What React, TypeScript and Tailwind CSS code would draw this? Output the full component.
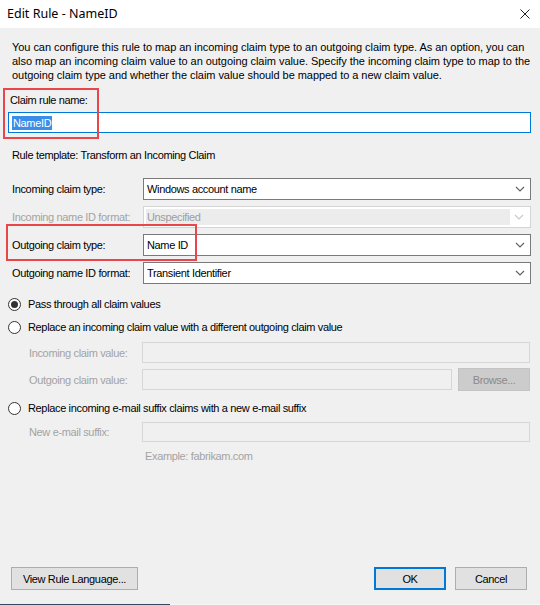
import React from "react";

function Chevron({ disabled }: { disabled?: boolean }) {
  return (
    <svg viewBox="0 0 10 6" className="h-[6px] w-[10px]" aria-hidden>
      <path
        d="M1 1l4 4 4-4"
        fill="none"
        stroke={disabled ? "#c8c8c8" : "#606060"}
        strokeWidth="1.1"
      />
    </svg>
  );
}

function Select({ value, disabled }: { value: string; disabled?: boolean }) {
  if (disabled) {
    return (
      <div className="flex h-[22px] flex-1 items-center border border-[#d4d4d4] bg-white p-[2px]">
        <div className="flex h-full flex-1 items-center bg-[#ececec] pl-[1px] text-[#9d9d9d]">{value}</div>
        <div className="flex w-[18px] items-center justify-center">
          <Chevron disabled />
        </div>
      </div>
    );
  }
  return (
    <div className="flex h-[22px] flex-1 items-center border border-[#7a7a7a] bg-white pl-[3px]">
      <span className="flex-1">{value}</span>
      <div className="flex w-[20px] items-center justify-center">
        <Chevron />
      </div>
    </div>
  );
}

function FieldRow({ label, value, disabled }: { label: string; value: string; disabled?: boolean }) {
  return (
    <div className="flex items-center">
      <span className={`w-[131px] ${disabled ? "text-[#a3a3a3]" : ""}`}>{label}</span>
      <Select value={value} disabled={disabled} />
    </div>
  );
}

function Radio({ checked, label }: { checked?: boolean; label: string }) {
  return (
    <div className="flex h-[16px] items-center pl-[8px]">
      <span className="flex h-[13px] w-[13px] items-center justify-center rounded-full border border-[#333333] bg-white">
        {checked && <span className="h-[7px] w-[7px] rounded-full bg-[#333333]" />}
      </span>
      <span className="ml-[7px]">{label}</span>
    </div>
  );
}

function Btn({ label, width, primary, disabled }: { label: string; width: string; primary?: boolean; disabled?: boolean }) {
  return (
    <div
      className={`flex h-[23px] items-center justify-center ${width} ${
        disabled
          ? "border border-[#c4c4c4] bg-[#cccccc] text-[#8a8a8a]"
          : primary
          ? "border-2 border-[#0078d7] bg-[#e1e1e1]"
          : "border border-[#adadad] bg-[#e1e1e1]"
      }`}
    >
      {label}
    </div>
  );
}

export default function App() {
  return (
    <div
      className="relative flex h-[605px] w-[540px] flex-col bg-[#f0f0f0] text-[11px] leading-[14px] tracking-[-0.35px] text-black"
      style={{ fontFamily: '"Liberation Sans", Arial, sans-serif' }}
    >
      {/* Title bar */}
      <div className="flex h-[28px] items-center justify-between bg-white pl-[7px] pr-[10px]">
        <span className="text-[12.5px] tracking-normal" style={{ fontFamily: '"Noto Sans", sans-serif' }}>
          Edit Rule - NameID
        </span>
        <svg viewBox="0 0 10 10" className="h-[10px] w-[10px]" aria-hidden>
          <path d="M0.5 0.5l9 9M9.5 0.5l-9 9" stroke="#222" strokeWidth="1" />
        </svg>
      </div>

      <div className="flex flex-1 flex-col pl-[12px] pr-[9px]">
        <p className="mt-[12px] tracking-[-0.05px]">
          You can configure this rule to map an incoming claim type to an outgoing claim type. As an option, you can
          also map an incoming claim value to an outgoing claim value. Specify the incoming claim type to map to the
          outgoing claim type and whether the claim value should be mapped to a new claim value.
        </p>

        <span className="mt-[11px] -ml-[2px]">Claim rule name:</span>
        <div className="-ml-[4px] mt-[5px] flex h-[21px] items-center border border-[#0078d7] bg-white pl-[3px]">
          <span className="bg-[#3b8ee8] px-[1px] text-white">NameID</span>
        </div>

        <span className="mt-[15px]">Rule template: Transform an Incoming Claim</span>

        <div className="mt-[16px] flex flex-col gap-[6px]">
          <FieldRow label="Incoming claim type:" value="Windows account name" />
          <FieldRow label="Incoming name ID format:" value="Unspecified" disabled />
          <FieldRow label="Outgoing claim type:" value="Name ID" />
          <FieldRow label="Outgoing name ID format:" value="Transient Identifier" />
        </div>

        <div className="-ml-[12px] mt-[12px]">
          <Radio checked label="Pass through all claim values" />
        </div>
        <div className="-ml-[12px] mt-[7px]">
          <Radio label="Replace an incoming claim value with a different outgoing claim value" />
        </div>

        <div className="mt-[7px] flex items-center pl-[17px] text-[#a3a3a3]">
          <span className="w-[113px]">Incoming claim value:</span>
          <div className="mr-[1px] h-[21px] flex-1 border border-[#d6d6d6] bg-[#f0f0f0]" />
        </div>
        <div className="mt-[5px] flex items-center pl-[17px] text-[#a3a3a3]">
          <span className="w-[113px]">Outgoing claim value:</span>
          <div className="h-[21px] flex-1 border border-[#d6d6d6] bg-[#f0f0f0]" />
          <div className="ml-[6px] mr-[1px]">
            <Btn label="Browse..." width="w-[72px]" disabled />
          </div>
        </div>

        <div className="-ml-[12px] mt-[9px]">
          <Radio label="Replace incoming e-mail suffix claims with a new e-mail suffix" />
        </div>
        <div className="mt-[6px] flex items-center pl-[17px] text-[#a3a3a3]">
          <span className="w-[113px]">New e-mail suffix:</span>
          <div className="mr-[1px] h-[20px] flex-1 border border-[#d6d6d6] bg-[#f0f0f0]" />
        </div>
        <span className="mt-[7px] pl-[133px] text-[#a3a3a3]">Example: fabrikam.com</span>

        <div className="mt-auto flex items-center">
          <div className="-ml-[1px]">
            <Btn label="View Rule Language..." width="w-[127px]" />
          </div>
          <div className="ml-auto flex gap-[9px] pr-[4px]">
            <Btn label="OK" width="w-[72px]" primary />
            <Btn label="Cancel" width="w-[72px]" />
          </div>
        </div>
        <div className="h-[14px]" />
      </div>

      {/* screen edge below the dialog */}
      <div className="flex h-[1px]">
        <div className="w-[170px] bg-[#34495e]" />
        <div className="flex-1 bg-[#f7f7f7]" />
      </div>

      {/* annotation boxes */}
      <div className="pointer-events-none absolute left-[3px] top-[88px] h-[51px] w-[96px] border-2 border-[#e8464b]" />
      <div className="pointer-events-none absolute left-[6px] top-[224px] h-[37px] w-[191px] border-2 border-[#e8464b]" />
    </div>
  );
}
